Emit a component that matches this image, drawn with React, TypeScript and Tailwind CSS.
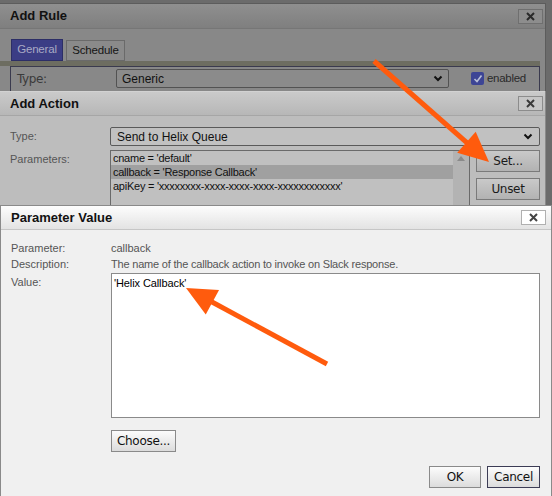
import { ReactNode } from 'react';

const closeGlyph = (
  <svg width="11" height="11" viewBox="0 0 11 11">
    <path d="M2 2 L9 9 M9 2 L2 9" stroke="currentColor" strokeWidth="2" />
  </svg>
);

function CloseButton({ tone }: { tone: 'dark' | 'mid' | 'light' }) {
  const cls =
    tone === 'dark'
      ? 'bg-[#8d8d8d] border-[#6f6f6f] text-[#2a2a2a]'
      : tone === 'mid'
        ? 'bg-[#c6c6c6] border-[#8c8c8c] text-[#3a3a3a]'
        : 'bg-white border-[#b0b0b0] text-[#444]';
  return (
    <div className={`w-[25px] h-[15px] border flex items-center justify-center ${cls}`}>{closeGlyph}</div>
  );
}

function Chevron() {
  return (
    <svg width="10" height="7" viewBox="0 0 10 7">
      <path d="M1.5 1.5 L5 5 L8.5 1.5" fill="none" stroke="#111" strokeWidth="2" />
    </svg>
  );
}

function PlainButton({ children, className = '' }: { children: ReactNode; className?: string }) {
  return (
    <div
      className={`h-[22px] flex items-center justify-center border text-[12px] font-['DejaVu_Sans',sans-serif] tracking-[-0.3px] ${className}`}
    >
      {children}
    </div>
  );
}

function Arrow({ from, to }: { from: [number, number]; to: [number, number] }) {
  const dx = to[0] - from[0];
  const dy = to[1] - from[1];
  const len = Math.hypot(dx, dy);
  const ux = dx / len;
  const uy = dy / len;
  const head = 30;
  const half = 14;
  const bx = to[0] - ux * head;
  const by = to[1] - uy * head;
  const nx = -uy;
  const ny = ux;
  const pts = `${to[0]},${to[1]} ${bx + nx * half},${by + ny * half} ${bx - nx * half},${by - ny * half}`;
  return (
    <g>
      <line x1={from[0]} y1={from[1]} x2={bx + ux * 2} y2={by + uy * 2} stroke="#ff5b0d" strokeWidth="5" />
      <polygon points={pts} fill="#ff5b0d" />
    </g>
  );
}

export default function App() {
  return (
    <div className="relative w-[552px] h-[496px] overflow-hidden bg-[#6b6b6b] flex flex-col font-['Liberation_Sans',Arial,sans-serif] text-[11px]">
      {/* Add Rule, behind two backdrops */}
      <div className="h-[91px] pt-[3px] shrink-0">
        <div className="w-[546px] h-[88px] bg-[#888888] border-t border-r border-[#5c5c5c] overflow-hidden">
          <div className="h-[25px] flex items-center justify-between pl-[10px] pr-[2px] bg-gradient-to-b from-[#8f8f8f] to-[#7f7f7f] border-b border-[#767676]">
            <span className="text-[13px] font-bold text-[#111]">Add Rule</span>
            <CloseButton tone="dark" />
          </div>
          <div className="pt-[10px] pl-[11px] flex items-end gap-[3px] h-[32px]">
            <div className="w-[52px] h-[22px] bg-[#3b3d85] border border-[#2c2e66] flex items-center justify-center text-[11.5px] text-[#a9aac4] tracking-[-0.2px]">
              General
            </div>
            <div className="w-[59px] h-[21px] bg-[#8a8a8a] border border-[#6a6a6a] flex items-center justify-center text-[11.5px] text-[#151515] tracking-[-0.2px]">
              Schedule
            </div>
          </div>
          <div className="w-[540px] h-[5px] bg-[#6d6d61]" />
          <div className="ml-[10px] w-[530px] h-[30px] border-t border-l border-r border-[#3a3a4e] flex items-start pt-[2px]">
            <span className="w-[105px] pl-[6px] pt-[1px] text-[12px] text-[#3a3a3a] font-['DejaVu_Sans',sans-serif] tracking-[-0.4px]">
              Type:
            </span>
            <div className="w-[333px] h-[19px] border border-[#525252] rounded-[2px] bg-[#8b8b8b] flex items-center justify-between pl-[5px] pr-[5px] text-[12px] text-[#111]">
              <span>Generic</span>
              <Chevron />
            </div>
            <div className="ml-[22px] mt-[1px] flex items-center gap-[3px]">
              <div className="w-[13px] h-[13px] bg-[#3d4595] rounded-[2px] flex items-center justify-center">
                <svg width="10" height="10" viewBox="0 0 10 10">
                  <path d="M1.5 5 L4 7.5 L8.5 1.5" fill="none" stroke="#b9bfd8" strokeWidth="1.6" />
                </svg>
              </div>
              <span className="text-[11.5px] text-[#2a2a2a] tracking-[-0.3px]">enabled</span>
            </div>
          </div>
        </div>
      </div>

      {/* Add Action, behind one backdrop */}
      <div className="h-[114px] shrink-0">
        <div className="w-[546px] h-[114px] bg-[#bdbdbd] border-r border-[#8a8a8a] overflow-hidden">
          <div className="h-[25px] flex items-center justify-between pl-[10px] pr-[2px] bg-gradient-to-b from-[#cacaca] to-[#b7b7b7] border-t border-b border-t-[#d2d2d2] border-b-[#a6a6a6]">
            <span className="text-[13px] font-bold text-[#111]">Add Action</span>
            <CloseButton tone="mid" />
          </div>
          <div className="pt-[11px] pl-[10px] flex flex-col gap-[4px]">
            <div className="flex items-center h-[19px]">
              <span className="w-[100px] text-[#555]">Type:</span>
              <div className="w-[430px] h-[19px] border border-[#5a5a5a] rounded-[2px] bg-[#c1c1c1] flex items-center justify-between pl-[6px] pr-[6px] text-[12px] text-[#111]">
                <span>Send to Helix Queue</span>
                <Chevron />
              </div>
            </div>
            <div className="flex items-start">
              <span className="w-[100px] pt-[1px] text-[#555]">Parameters:</span>
              <div className="w-[360px] h-[70px] border border-[#6a6a6a] bg-[#c0c0c0] flex">
                <div className="flex-1 flex flex-col text-[11px] tracking-[-0.25px] text-[#111] leading-[14px]">
                  <span className="pl-[2px]">cname = 'default'</span>
                  <span className="pl-[2px] bg-[#a0a0a0]">callback = 'Response Callback'</span>
                  <span className="pl-[2px] whitespace-nowrap">apiKey = 'xxxxxxxx-xxxx-xxxx-xxxx-xxxxxxxxxxxx'</span>
                </div>
                <div className="w-[16px] bg-[#b3b3b3] flex justify-center pt-[5px]">
                  <svg width="8" height="5" viewBox="0 0 8 5">
                    <path d="M0 5 L4 0 L8 5 Z" fill="#8a8a8a" />
                  </svg>
                </div>
              </div>
              <div className="ml-[6px] flex flex-col gap-[6px]">
                <PlainButton className="w-[64px] bg-gradient-to-b from-[#c9c9c9] to-[#b2b2b2] border-[#7a7a7a] text-[#1a1a1a]">
                  Set...
                </PlainButton>
                <PlainButton className="w-[64px] bg-gradient-to-b from-[#c9c9c9] to-[#b2b2b2] border-[#7a7a7a] text-[#1a1a1a]">
                  Unset
                </PlainButton>
              </div>
            </div>
          </div>
        </div>
      </div>

      {/* Parameter Value, the active dialog */}
      <div className="flex-1 w-[552px] bg-[#f0f0f0] border-t border-l border-r border-[#8a8a8a] flex flex-col">
        <div className="h-[24px] shrink-0 flex items-center justify-between pl-[10px] pr-[5px] bg-gradient-to-b from-[#fdfdfd] to-[#e3e3e3] border-b border-[#c6c6c6]">
          <span className="text-[13px] font-bold text-[#111]">Parameter Value</span>
          <CloseButton tone="light" />
        </div>
        <div className="pl-[10px] pt-[10px] flex flex-col text-[#555]">
          <div className="flex h-[16px] items-center">
            <span className="w-[100px]">Parameter:</span>
            <span>callback</span>
          </div>
          <div className="flex h-[16px] items-center">
            <span className="w-[100px]">Description:</span>
            <span className="tracking-[-0.2px]">The name of the callback action to invoke on Slack response.</span>
          </div>
          <div className="flex items-start mt-[1px]">
            <span className="w-[100px] pt-[1px]">Value:</span>
            <div className="w-[429px] h-[145px] bg-white border border-[#8a8a8a] pl-[2px] pt-[1px] text-[11px] tracking-[-0.1px] text-[#000]">
              'Helix Callback'
            </div>
          </div>
          <div className="pl-[100px] mt-[12px]">
            <PlainButton className="w-[65px] bg-gradient-to-b from-[#fcfcfc] to-[#dcdcdc] border-[#8a8a8a] text-[#111]">
              Choose...
            </PlainButton>
          </div>
          <div className="flex justify-end gap-[6px] pr-[11px] mt-[14px]">
            <PlainButton className="w-[52px] bg-gradient-to-b from-[#fcfcfc] to-[#dcdcdc] border-[#8a8a8a] text-[#111]">
              OK
            </PlainButton>
            <PlainButton className="w-[53px] bg-gradient-to-b from-[#fcfcfc] to-[#dcdcdc] border-[#3c3c55] text-[#111]">
              Cancel
            </PlainButton>
          </div>
        </div>
      </div>

      {/* callout arrows drawn over the dialogs */}
      <svg className="absolute inset-0 pointer-events-none" width="552" height="496">
        <Arrow from={[374, 61]} to={[489, 162]} />
        <Arrow from={[327, 364]} to={[186, 288]} />
      </svg>
    </div>
  );
}
